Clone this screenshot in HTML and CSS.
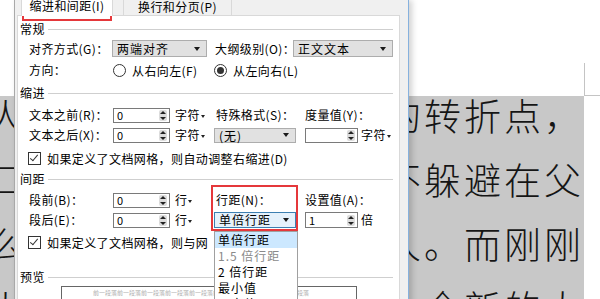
FILE: index.html
```html
<!DOCTYPE html>
<html lang="zh-CN">
<head>
    <meta charset="UTF-8">
    <title>段落</title>
    <link rel="stylesheet" href="styles.css">
</head>
<body>

<div class="screen">
    <!-- document page behind the dialog -->
    <div class="doc">
        <div class="doc-top"><span class="crop-mark"></span></div>
        <div class="doc-body">
            <div class="selection">
                <div class="line"><span class="frag-left"><span>人</span></span><span class="hidden-part"></span><span class="frag-right"><span>的转折点，</span></span></div>
                <div class="line"><span class="frag-left"><span>口</span></span><span class="hidden-part"></span><span class="frag-right"><span>不躲避在父</span></span></div>
                <div class="line"><span class="frag-left"><span>么</span></span><span class="hidden-part"></span><span class="frag-right"><span>人。而刚刚</span></span></div>
                <div class="line"><span class="frag-left"><span>火</span></span><span class="hidden-part"></span><span class="frag-right"><span>个全新的大</span></span></div>
            </div>
            <div class="margin-right"></div>
        </div>
    </div>

    <!-- paragraph dialog -->
    <div class="dialog">
        <div class="tabs">
            <div class="tab active">缩进和间距(I)</div>
            <div class="tab">换行和分页(P)</div>
        </div>
        <div class="panel">
            <div class="group-title">常规</div>
            <div class="grid general">
                <span class="lbl">对齐方式(G)：</span>
                <div class="select w95">两端对齐<span class="arrow"></span></div>
                <span class="lbl">大纲级别(O)：</span>
                <div class="select w100">正文文本<span class="arrow"></span></div>

                <span class="lbl">方向：</span>
                <div class="radio-opt"><span class="radio"></span>从右向左(F)</div>
                <div class="radio-opt wide"><span class="radio checked"></span>从左向右(L)</div>
            </div>

            <div class="group-title">缩进</div>
            <div class="grid fields">
                <span class="lbl">文本之前(R)：</span>
                <div class="spin"><span>0</span><span class="spin-btn"></span></div>
                <span class="unit">字符<span class="caret"></span></span>
                <span class="lbl col-label">特殊格式(S)：</span>
                <span class="lbl">度量值(Y)：</span>
                <span></span>

                <span class="lbl">文本之后(X)：</span>
                <div class="spin"><span>0</span><span class="spin-btn"></span></div>
                <span class="unit">字符<span class="caret"></span></span>
                <div class="select w82">(无)<span class="arrow"></span></div>
                <div class="spin w53"><span></span><span class="spin-btn"></span></div>
                <span class="unit small">字符<span class="caret"></span></span>
            </div>
            <div class="check-row">
                <span class="check"></span>如果定义了文档网格，则自动调整右缩进(D)
            </div>

            <div class="group-title">间距</div>
            <div class="grid fields">
                <span class="lbl">段前(B)：</span>
                <div class="spin"><span>0</span><span class="spin-btn"></span></div>
                <span class="unit">行<span class="caret"></span></span>
                <span class="lbl col-label">行距(N)：</span>
                <span class="lbl">设置值(A)：</span>
                <span></span>

                <span class="lbl">段后(E)：</span>
                <div class="spin"><span>0</span><span class="spin-btn"></span></div>
                <span class="unit">行<span class="caret"></span></span>
                <div class="select w82 focused">单倍行距<span class="arrow"></span></div>
                <div class="spin w53 tall"><span>1</span><span class="spin-btn"></span></div>
                <span class="unit small">倍</span>
            </div>
            <div class="check-row second">
                <span class="check"></span>如果定义了文档网格，则与网
            </div>

            <div class="group-title preview-title">预览</div>
            <div class="preview">
                <div class="preview-text">前一段落前一段落前一段落前一段落前一段落前一段落前一段落前一段落前一段落</div>
            </div>
        </div>
    </div>

    <!-- open list of the line spacing select -->
    <div class="dropdown">
        <div class="option selected">单倍行距</div>
        <div class="option dim">1.5 倍行距</div>
        <div class="option">2 倍行距</div>
        <div class="option">最小值</div>
        <div class="option">固定值</div>
    </div>

    <!-- red highlight boxes -->
    <div class="mark mark-tab"></div>
    <div class="mark mark-spacing"></div>
</div>

</body>
</html>
```

FILE: styles.css
```css
body {
    margin: 0;
    font-family: "Noto Sans CJK SC", sans-serif;
    color: #000;
}
.screen {
    position: relative;
    width: 600px;
    height: 299px;
    overflow: hidden;
    background-color: #ffffff;
}

/* document page */
.doc-top {
    height: 96px;
    display: flex;
    justify-content: flex-end;
}
.crop-mark {
    width: 15px;
    height: 32px;
    margin-top: 63px;
    border-left: 1px solid #c4c4c4;
    border-bottom: 1px solid #c4c4c4;
}
.doc-body {
    display: flex;
    height: 203px;
}
.selection {
    width: 584px;
    background-color: #c8c8c8;
}
.margin-right {
    flex: 1;
}
.line {
    display: flex;
    height: 64px;
    line-height: 38px;
    font-size: 37px;
    letter-spacing: 3px;
    font-weight: 200;
    white-space: nowrap;
    color: #151515;
}
.frag-left {
    width: 14px;
    display: flex;
    justify-content: center;
    overflow: hidden;
}
.hidden-part {
    flex: 1;
}
.frag-right {
    width: 175px;
    display: flex;
    justify-content: flex-end;
    overflow: hidden;
}

/* dialog */
.dialog {
    position: absolute;
    left: 14px;
    top: 0;
    width: 393px;
    height: 310px;
    background-color: #f0f0f0;
    border-left: 1px solid #a9a9a9;
    border-right: 1px solid #86b1de;
    box-shadow: 3px 0 6px rgba(0, 0, 0, 0.18);
    font-size: 12px;
    letter-spacing: 0.4px;
}
.tabs {
    display: flex;
    height: 15px;
}
.tab {
    position: relative;
    height: 15px;
    line-height: 14px;
    border-left: 1px solid #d9d9d9;
    border-right: 1px solid #d9d9d9;
    text-align: center;
    box-sizing: border-box;
}
.tab.active {
    width: 92px;
    margin-left: 6px;
    height: 16px;
    line-height: 12px;
    background-color: #ffffff;
    z-index: 1;
}
.tab:not(.active) {
    width: 109px;
    margin-left: 10px;
    background-color: #f0f0f0;
}
.panel {
    margin-left: 2px;
    width: 383px;
    height: 300px;
    background-color: #ffffff;
    border: 1px solid #d9d9d9;
    padding-left: 2px;
    box-sizing: border-box;
}
.group-title {
    display: flex;
    align-items: center;
    gap: 3px;
    height: 14px;
    line-height: 14px;
    margin-top: 6px;
    margin-right: 6px;
}
.group-title::after {
    content: "";
    flex: 1;
    height: 1px;
    background-color: #cfcfcf;
}
.preview-title {
    margin-top: 20px;
}

.grid {
    display: grid;
    margin-left: 9px;
    align-items: center;
}
.general {
    margin-top: 3px;
    grid-template-columns: 83px 103px 78px 100px;
    grid-template-rows: 19px 20px;
    row-gap: 2px;
}
.fields {
    margin-top: 5px;
    grid-template-columns: 84px 57px 44px 91px 53px auto;
    grid-template-rows: 20px 20px;
}
.check-row + .group-title + .fields {
    margin-top: 4px;
}
.lbl {
    white-space: nowrap;
    line-height: 14px;
}
.col-label {
    padding-left: 2px;
}

.select {
    position: relative;
    height: 17px;
    line-height: 15px;
    padding-left: 4px;
    letter-spacing: 1px;
    background-color: #e1e1e1;
    border: 1px solid #adadad;
    box-sizing: border-box;
}
.select.w95 { width: 95px; }
.select.w100 { width: 100px; }
.select.w82 { width: 82px; height: 15px; line-height: 13px; }
.select.focused {
    height: 16px;
    line-height: 14px;
    background-color: #e5f1fb;
    border-color: #3c7fb1;
}
.arrow {
    position: absolute;
    right: 6px;
    top: 50%;
    margin-top: -2px;
    border-left: 3px solid transparent;
    border-right: 3px solid transparent;
    border-top: 4px solid #1a1a1a;
}

.radio-opt {
    display: flex;
    align-items: center;
    gap: 6px;
    margin-left: 1px;
    white-space: nowrap;
}
.radio-opt.wide {
    grid-column: span 2;
    margin-left: -1px;
}
.radio {
    width: 13px;
    height: 13px;
    border: 1px solid #333;
    border-radius: 50%;
    box-sizing: border-box;
    display: flex;
    align-items: center;
    justify-content: center;
}
.radio.checked::after {
    content: "";
    width: 7px;
    height: 7px;
    border-radius: 50%;
    background-color: #333;
}

.spin {
    display: flex;
    align-items: center;
    justify-content: space-between;
    width: 57px;
    height: 15px;
    padding-left: 3px;
    padding-right: 2px;
    border: 1px solid #7a7a7a;
    background-color: #fff;
    box-sizing: border-box;
    font-size: 11px;
    line-height: 13px;
}
.spin.w53 { width: 53px; }
.spin.tall { height: 16px; }
.spin-btn {
    width: 8px;
    height: 11px;
    border-radius: 2px;
    background-color: #dcdcdc;
    position: relative;
}
.spin-btn::before,
.spin-btn::after {
    content: "";
    position: absolute;
    left: 1px;
    border-left: 3px solid transparent;
    border-right: 3px solid transparent;
}
.spin-btn::before {
    top: 1px;
    border-bottom: 3px solid #222;
}
.spin-btn::after {
    bottom: 1px;
    border-top: 3px solid #222;
}

.unit {
    padding-left: 5px;
    white-space: nowrap;
    line-height: 14px;
}
.unit.small {
    padding-left: 3px;
}
.caret {
    display: inline-block;
    vertical-align: middle;
    margin-left: 1px;
    border-left: 2px solid transparent;
    border-right: 2px solid transparent;
    border-top: 3px solid #222;
}

.check-row {
    display: flex;
    align-items: center;
    gap: 6px;
    height: 16px;
    margin-top: 5px;
    margin-left: 8px;
    white-space: nowrap;
}
.check-row.second {
    margin-top: 4px;
}
.check {
    width: 13px;
    height: 13px;
    border: 1px solid #333;
    box-sizing: border-box;
    position: relative;
}
.check::after {
    content: "";
    position: absolute;
    left: 3px;
    top: 0;
    width: 3px;
    height: 7px;
    border-right: 1px solid #333;
    border-bottom: 1px solid #333;
    transform: rotate(40deg);
}

.preview {
    margin-top: 2px;
    margin-left: 41px;
    width: 296px;
    height: 40px;
    border: 1px solid #666;
    box-sizing: border-box;
    overflow: hidden;
}
.preview-text {
    margin-top: 2px;
    padding-left: 31px;
    font-size: 6px;
    line-height: 8px;
    letter-spacing: 0;
    color: #b0b0b0;
    white-space: nowrap;
}

/* open dropdown list */
.dropdown {
    position: absolute;
    left: 214px;
    top: 231px;
    width: 84px;
    height: 80px;
    background-color: #fff;
    border: 1px solid #a0a0a0;
    box-sizing: border-box;
    font-size: 12px;
    letter-spacing: 1px;
}
.option {
    height: 16px;
    line-height: 16px;
    padding-left: 3px;
    white-space: nowrap;
}
.option.selected {
    background-color: #cce8ff;
}
.option.dim {
    color: #8a8a8a;
}

/* red annotation boxes */
.mark {
    position: absolute;
    border: 2px solid #e5383b;
    box-sizing: border-box;
}
.mark-tab {
    left: 22px;
    top: -3px;
    width: 90px;
    height: 24px;
}
.mark-spacing {
    left: 211px;
    top: 185px;
    width: 87px;
    height: 46px;
}
```
